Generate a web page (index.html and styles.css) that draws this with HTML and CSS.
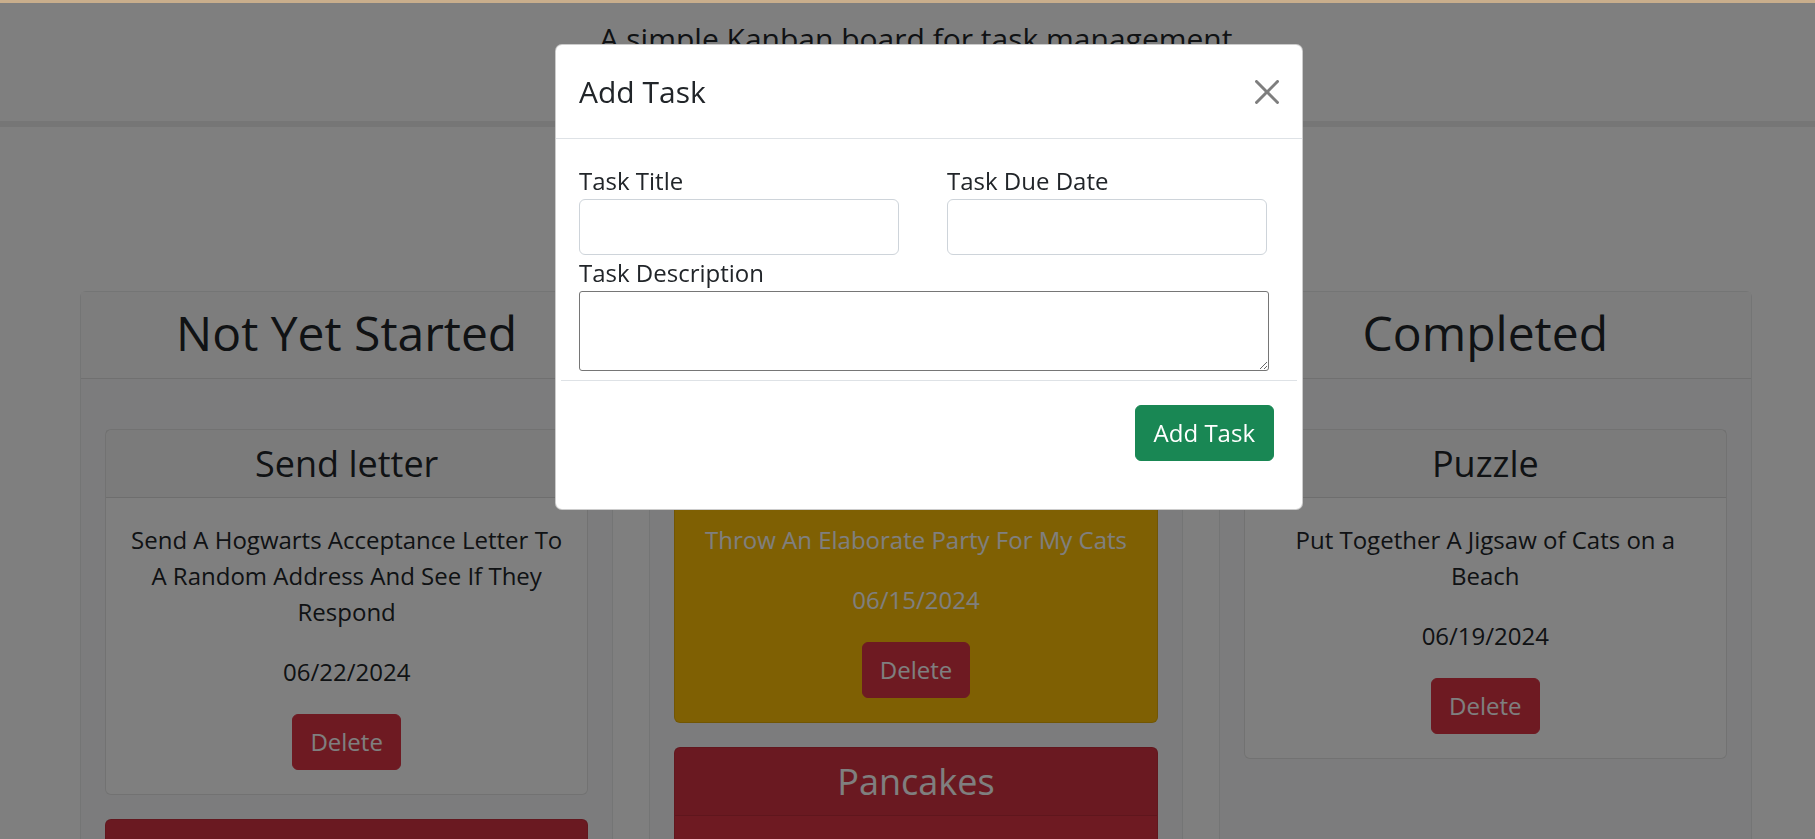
FILE: index.html
```html
<!DOCTYPE html>
<html lang="en">
<head>
<meta charset="utf-8">
<title>Kanban Board</title>
<link rel="stylesheet" href="styles.css">
</head>
<body>
<div class="topline"></div>
<div class="page">
  <header class="site-header">
    <p class="lead">A simple Kanban board for task management</p>
  </header>
  <div class="toolbar">
    <button class="btn btn-success" type="button">Add Task</button>
  </div>
  <main class="board">
    <section class="column">
      <div class="column-header"><h2>Not Yet Started</h2></div>
      <div class="column-body">
        <article class="task-card">
          <div class="task-header"><h4>Send letter</h4></div>
          <div class="task-body">
            <p>Send A Hogwarts Acceptance Letter To A Random Address And See If They Respond</p>
            <p>06/22/2024</p>
            <button class="btn btn-danger" type="button">Delete</button>
          </div>
        </article>
        <article class="task-card task-danger">
          <div class="task-header"><h4>Bake Cake</h4></div>
          <div class="task-body">
            <p>Bake A Cake For The Neighbours</p>
            <p>06/10/2024</p>
            <button class="btn btn-danger" type="button">Delete</button>
          </div>
        </article>
      </div>
    </section>
    <section class="column">
      <div class="column-header"><h2>In Progress</h2></div>
      <div class="column-body">
        <article class="task-card task-warning">
          <div class="task-header"><h4>Cat Party</h4></div>
          <div class="task-body">
            <p>Throw An Elaborate Party For My Cats</p>
            <p>06/15/2024</p>
            <button class="btn btn-danger" type="button">Delete</button>
          </div>
        </article>
        <article class="task-card task-danger">
          <div class="task-header"><h4>Pancakes</h4></div>
          <div class="task-body">
            <p>Make Pancakes For Breakfast</p>
            <p>06/12/2024</p>
            <button class="btn btn-danger" type="button">Delete</button>
          </div>
        </article>
      </div>
    </section>
    <section class="column">
      <div class="column-header"><h2>Completed</h2></div>
      <div class="column-body">
        <article class="task-card">
          <div class="task-header"><h4>Puzzle</h4></div>
          <div class="task-body">
            <p>Put Together A Jigsaw of Cats on a Beach</p>
            <p>06/19/2024</p>
            <button class="btn btn-danger" type="button">Delete</button>
          </div>
        </article>
      </div>
    </section>
  </main>
</div>

<div class="backdrop"></div>
<div class="modal-wrap">
  <div class="modal" role="dialog" aria-labelledby="modal-title">
    <div class="modal-header">
      <h5 class="modal-title" id="modal-title">Add Task</h5>
      <button class="btn-close" type="button" aria-label="Close">
        <svg viewBox="0 0 16 16" width="24" height="24" aria-hidden="true"><path d="M.293.293a1 1 0 0 1 1.414 0L8 6.586 14.293.293a1 1 0 1 1 1.414 1.414L9.414 8l6.293 6.293a1 1 0 0 1-1.414 1.414L8 9.414l-6.293 6.293a1 1 0 0 1-1.414-1.414L6.586 8 .293 1.707a1 1 0 0 1 0-1.414z"/></svg>
      </button>
    </div>
    <form class="modal-form">
      <div class="modal-body">
        <div class="form-row">
          <div class="field">
            <label for="task-title">Task Title</label>
            <input id="task-title" class="form-control" type="text">
          </div>
          <div class="field">
            <label for="task-date">Task Due Date</label>
            <input id="task-date" class="form-control" type="text">
          </div>
        </div>
        <label for="task-desc">Task Description</label>
        <textarea id="task-desc" class="desc"></textarea>
      </div>
      <div class="modal-footer">
        <button class="btn btn-success" type="button">Add Task</button>
      </div>
    </form>
  </div>
</div>
</body>
</html>
```
FILE: styles.css
```css
html, body {
  margin: 0;
  padding: 0;
  overflow: hidden;
  background: #ffffff;
}

body {
  font-family: "Open Sans", "Noto Sans", sans-serif;
  font-size: 24px;
  line-height: 36px;
  color: #212529;
}

*, *::before, *::after {
  box-sizing: border-box;
}

.topline {
  position: fixed;
  top: 0;
  left: 0;
  right: 0;
  height: 3px;
  background: #c9ae8c;
  z-index: 30;
}

.page {
  width: 1832px;
  padding-top: 3px;
}

.site-header {
  padding: 13px 0 60px;
  border-bottom: 6px solid #ececec;
  text-align: center;
}

.lead {
  margin: 0;
  font-size: 30px;
  line-height: 45px;
  font-weight: 400;
}

.toolbar {
  padding: 54px 0 54px;
  text-align: center;
}

.btn {
  display: inline-block;
  font-family: inherit;
  font-size: 24px;
  line-height: 36px;
  padding: 9px 18px;
  border: 1px solid transparent;
  border-radius: 6px;
  color: #ffffff;
  cursor: pointer;
}

.btn-success {
  background: #198754;
  border-color: #198754;
}

.btn-danger {
  background: #dc3545;
  border-color: #dc3545;
  padding: 9px 17px;
}

.board {
  width: 1672px;
  margin: 0 auto;
  display: grid;
  grid-template-columns: 1fr 1fr 1fr;
  column-gap: 36px;
  align-items: start;
}

.column {
  background: #f8f9fa;
  border: 1px solid rgba(0, 0, 0, 0.06);
  border-radius: 6px;
  min-height: 700px;
}

.column-header {
  background: #fbfbfb;
  border-bottom: 1px solid rgba(0, 0, 0, 0.1);
  padding: 12px 24px 16px;
  text-align: center;
}

.column-header h2 {
  margin: 0;
  font-size: 48px;
  line-height: 58px;
  font-weight: 400;
}

.column-body {
  padding: 26px 24px 24px;
}

.task-card {
  margin: 24px 0;
  background: #ffffff;
  border: 1px solid rgba(0, 0, 0, 0.1);
  border-radius: 6px;
  text-align: center;
}

.task-header {
  background: rgba(0, 0, 0, 0.03);
  border-bottom: 1px solid rgba(0, 0, 0, 0.1);
  padding: 12px 24px;
}

.task-header h4 {
  margin: 0;
  font-size: 36px;
  line-height: 43px;
  font-weight: 400;
}

.task-body {
  padding: 24px;
}

.task-body p {
  margin: 0 0 24px;
}

.task-warning {
  background: #ffc107;
  color: #ffffff;
}

.task-danger {
  background: #dc3545;
  color: #ffffff;
}

.backdrop {
  position: fixed;
  inset: 0;
  background: rgba(0, 0, 0, 0.5);
  z-index: 10;
}

.modal-wrap {
  position: fixed;
  top: 0;
  left: 0;
  width: 1858px;
  height: 100%;
  z-index: 20;
}

.modal {
  width: 748px;
  margin: 44px auto 0;
  background: #ffffff;
  border: 1px solid rgba(0, 0, 0, 0.2);
  border-radius: 7px;
}

.modal-header {
  display: flex;
  align-items: center;
  justify-content: space-between;
  padding: 24px 23px 24px 23px;
  border-bottom: 1px solid #dee2e6;
}

.modal-title {
  margin: 0;
  font-size: 30px;
  line-height: 45px;
  font-weight: 400;
}

.btn-close {
  width: 24px;
  height: 24px;
  padding: 0;
  border: 0;
  background: transparent;
  opacity: 0.5;
  display: flex;
}

.btn-close svg {
  fill: #000000;
}

.modal-body {
  padding: 24px 23px 9px;
}

.form-row {
  display: grid;
  grid-template-columns: 320px 320px;
  column-gap: 48px;
}

.field label,
.modal-body > label {
  display: block;
}

.form-control {
  display: block;
  width: 320px;
  height: 56px;
  padding: 9px 18px;
  font-family: inherit;
  font-size: 24px;
  border: 1px solid #ced4da;
  border-radius: 6px;
  color: #212529;
}

.desc {
  display: block;
  width: 690px;
  height: 80px;
  font-family: inherit;
  border: 1px solid #767676;
  border-radius: 3px;
}

.modal-footer {
  margin: 0 5px;
  border-top: 1px solid #dee2e6;
  padding: 24px 23px 48px;
  display: flex;
  justify-content: flex-end;
}
```
